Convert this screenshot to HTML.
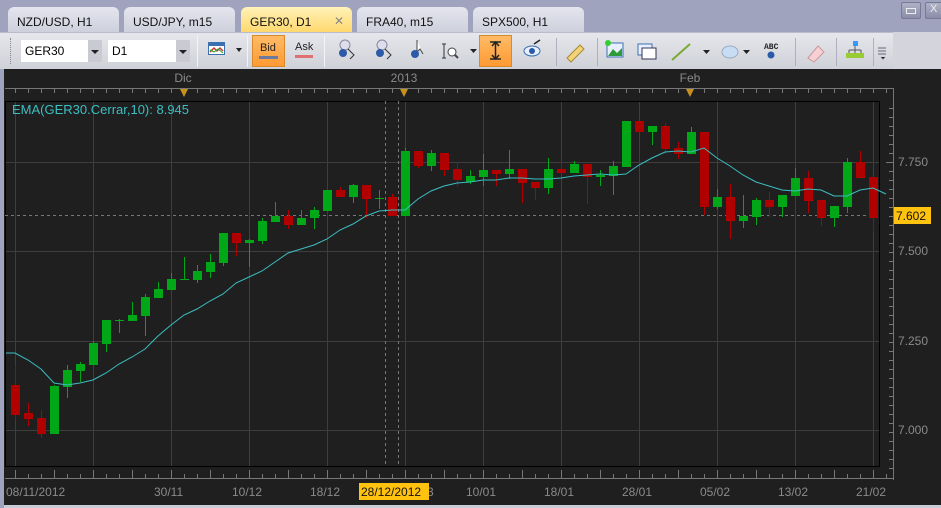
<!DOCTYPE html>
<html><head><meta charset="utf-8"><style>
*{margin:0;padding:0;box-sizing:border-box}
body{width:941px;height:508px;overflow:hidden;background:#9fa3bd;font-family:"Liberation Sans",sans-serif;position:relative}
.tab{position:absolute;top:7px;height:26px;width:111px;border-radius:6px 6px 0 0;background:linear-gradient(#e4e5ee,#cdcfdc);font-size:12px;color:#111;padding:8px 0 0 9px}
.tab.act{background:linear-gradient(#fff2b8,#ffd86a)}
.tb{position:absolute;left:0;top:32px;width:893px;height:37px;background:linear-gradient(#e6e7ec,#cfd1d8);border-top:1px solid #b8bbc8}
.tbr{position:absolute;left:893px;top:32px;width:48px;height:37px;background:#d3d4dc}
.sel{position:absolute;top:40px;height:22px;background:#fff;font-size:12px;padding:4px 4px}
.sel i{position:absolute;right:0;top:0;width:14px;height:22px;background:#c9cad2}
.sel i:after{content:"";position:absolute;left:3px;top:10px;border:4px solid transparent;border-top:4px solid #222}
.sep{position:absolute;top:35px;width:1px;height:32px;background:#aeb1bd;border-right:1px solid #f4f4f6}
.btn{position:absolute;top:35px;width:33px;height:32px;border:1px solid #d98a2a;background:linear-gradient(#ffbb66,#ff9a33)}
.ic{position:absolute;font-size:11px}
.dark{position:absolute;left:4px;top:69px;width:937px;height:436px;background:#1f1f1f}
.bot{position:absolute;left:0;top:505px;width:941px;height:3px;background:#c9cbd6}
</style></head><body>
<div class="tab" style="left:8px">NZD/USD, H1</div>
<div class="tab" style="left:124px">USD/JPY, m15</div>
<div class="tab act" style="left:241px">GER30, D1<span style="position:absolute;right:8px;top:7px;color:#888;font-size:12px">✕</span></div>
<div class="tab" style="left:357px">FRA40, m15</div>
<div class="tab" style="left:473px">SPX500, H1</div>
<div style="position:absolute;left:901px;top:2px;width:20px;height:17px;border-radius:2px;background:linear-gradient(#aeb1c6,#8a8ea8);border:1px solid #777a92"><div style="margin:5px 4px;height:6px;border:1px solid #eee"></div></div>
<div style="position:absolute;left:925px;top:2px;width:20px;height:17px;border-radius:2px;background:linear-gradient(#aeb1c6,#8a8ea8);border:1px solid #777a92;color:#eee;font-size:11px;padding-left:4px">X</div>
<div class="tb"></div><div class="tbr"></div>
<div style="position:absolute;left:10px;top:38px;width:2px;height:26px;border-left:1px dotted #888"></div>
<div class="sel" style="left:21px;width:81px">GER30<i></i></div>
<div class="sel" style="left:108px;width:82px">D1<i></i></div>
<div class="sep" style="left:197px"></div>
<svg class="ic" style="left:208px;top:42px" width="18" height="20"><rect x="0.5" y="0.5" width="16" height="12" fill="#fff" stroke="#3a6fb0"/><rect x="1" y="1" width="16" height="3" fill="#3a6fb0"/><polyline points="2,10 6,6 9,9 12,6 15,9" fill="none" stroke="#c33" stroke-width="1.5"/><polyline points="2,8 6,10 10,7 15,11" fill="none" stroke="#2a2" stroke-width="1"/></svg>
<div style="position:absolute;left:236px;top:48px;border:3.5px solid transparent;border-top:4px solid #222"></div>
<div class="sep" style="left:247px"></div>
<div class="btn" style="left:252px"><span style="position:absolute;left:7px;top:6px;font-size:11px;color:#222">Bid</span><span style="position:absolute;left:6px;top:20px;width:19px;height:3px;background:#6d7aa0"></span></div>
<span style="position:absolute;left:295px;top:41px;font-size:11px;color:#222">Ask</span><span style="position:absolute;left:295px;top:55px;width:18px;height:3px;background:#e07070"></span>
<div class="sep" style="left:324px"></div>
<svg style="position:absolute;left:337px;top:38px" width="220" height="28">
<g><circle cx="8" cy="7" r="5" fill="#dde" stroke="#889"/><circle cx="6" cy="15" r="4" fill="#2a5aa8"/><path d="M11 11 L17 17 L13 21" stroke="#333" fill="none"/></g>
<g transform="translate(37,0)"><circle cx="8" cy="7" r="5" fill="#dde" stroke="#889"/><circle cx="6" cy="15" r="4" fill="#2a5aa8"/><path d="M11 11 L17 17 L13 21" stroke="#333" fill="none"/></g>
<g transform="translate(72,0)"><path d="M8 2 L8 14 L11 11 L14 16" fill="#fff" stroke="#444"/><circle cx="6" cy="16" r="4" fill="#2a5aa8"/></g>
<g transform="translate(104,0)"><path d="M3 6 V20 M1 6 H5 M1 20 H5" stroke="#333"/><circle cx="11" cy="14" r="4" fill="#fff" stroke="#444"/><path d="M14 17 L17 20" stroke="#444" stroke-width="2"/></g>
<path d="M133 11 l3.5 4 l3.5 -4z" fill="#222"/>
</svg>
<div class="btn" style="left:479px"><svg width="31" height="30"><path d="M10 6 H21 M10 23 H21 M15.5 6 V23 M12 10 L15.5 6 L19 10 M12 19 L15.5 23 L19 19" stroke="#222" stroke-width="1.5" fill="none"/></svg></div>
<svg style="position:absolute;left:520px;top:38px" width="380" height="28">
<ellipse cx="12" cy="13" rx="8" ry="5" fill="#e8f0ff" stroke="#3a6fb0"/><circle cx="12" cy="13" r="3" fill="#2a5aa8"/><path d="M14 6 L20 2" stroke="#222" stroke-width="1.5"/>
<rect x="36" y="0" width="1" height="28" fill="#aeb1bd"/>
<path d="M47 20 L60 7 L64 11 L51 24z" fill="#f2d27a" stroke="#a88a30"/>
<rect x="77" y="0" width="1" height="28" fill="#aeb1bd"/>
<rect x="87" y="5" width="16" height="14" fill="#e8f0ff" stroke="#3a6fb0"/><path d="M88 18 L93 11 L97 15 L102 10 V18z" fill="#2f9a3a"/><circle cx="88" cy="5" r="3" fill="#3c3"/>
<rect x="118" y="6" width="14" height="11" fill="#e8f0ff" stroke="#3a6fb0"/><rect x="122" y="10" width="14" height="11" fill="#fff" stroke="#335"/>
<path d="M152 22 L170 6" stroke="#7a3" stroke-width="2"/><path d="M183 12 l3.5 4 l3.5 -4z" fill="#222"/>
<ellipse cx="210" cy="14" rx="8" ry="6" fill="#c8dcf4" stroke="#9ab"/><path d="M223 12 l3.5 4 l3.5 -4z" fill="#222"/>
<text x="244" y="11" font-size="8" font-family="Liberation Mono" font-weight="bold" fill="#222">ABC</text><circle cx="251" cy="17" r="3.5" fill="#2a5aa8"/>
<rect x="275" y="0" width="1" height="28" fill="#aeb1bd"/>
<path d="M288 20 L298 8 L304 14 L294 24z" fill="#f7d0d6" stroke="#c99"/>
<rect x="316" y="0" width="1" height="28" fill="#aeb1bd"/>
<rect x="333" y="3" width="5" height="5" fill="#39f"/><path d="M335 8 V12 M329 12 H341 M329 12 V15 M335 12 V15 M341 12 V15" stroke="#555"/><rect x="326" y="15" width="6" height="5" fill="#9c3"/><rect x="332" y="15" width="6" height="5" fill="#9c3"/><rect x="338" y="15" width="6" height="5" fill="#9c3"/>
<rect x="353" y="-3" width="1" height="32" fill="#aeb1bd"/>
<path d="M358 10 H366 M358 13 H366 M358 16 H366 M361 19 l2 2 l2 -2" stroke="#667"/>
</svg>
<div class="dark"></div>
<div class="bot"></div>
<div style="position:absolute;left:0;top:69px;width:4px;height:439px;background:#9fa3bd"></div>
<svg id="ch" style="position:absolute;left:0;top:0" width="941" height="508" font-family="Liberation Sans" font-size="12">
<text x="183" y="82" fill="#8a8a8a" text-anchor="middle">Dic</text>
<text x="404" y="82" fill="#8a8a8a" text-anchor="middle">2013</text>
<text x="690" y="82" fill="#8a8a8a" text-anchor="middle">Feb</text>
<path d="M5 88.5 H893.5 V480 M5 478.5 H893" stroke="#777" fill="none"/>
<g id="ticks" stroke="#777"></g>
<path d="M180 89 h8 l-4 8z M400 89 h8 l-4 8z M686 89 h8 l-4 8z" fill="#c8901e"/>
<rect x="5.5" y="101.5" width="874" height="365" fill="#1f1f1f" stroke="#000"/>
<g id="grid" stroke="#3e3e3e"></g>
<path d="M5 215.5 H880 M385.5 101 V466 M398.5 101 V466" stroke="#777" stroke-dasharray="3,3"/>
<g id="cd"></g>
<polyline id="ema" fill="none" stroke="#3bbfc2" stroke-width="1"/>
<text x="12" y="114" fill="#3bbfc2" font-size="13">EMA(GER30.Cerrar,10): 8.945</text>
<g fill="#8a8a8a">
<text x="898" y="166">7.750</text><text x="898" y="255">7.500</text><text x="898" y="345">7.250</text><text x="898" y="434">7.000</text>
<text x="6" y="496">08/11/2012</text><text x="154" y="496">30/11</text><text x="232" y="496">10/12</text><text x="310" y="496">18/12</text><text x="427" y="496">3</text><text x="466" y="496">10/01</text><text x="544" y="496">18/01</text><text x="622" y="496">28/01</text><text x="700" y="496">05/02</text><text x="778" y="496">13/02</text><text x="856" y="496">21/02</text>
</g>
<rect x="359" y="483" width="70" height="17" fill="#ffc20e"/><text x="361" y="496" fill="#111">28/12/2012</text>
<rect x="894" y="207" width="37" height="17" fill="#ffc20e"/><text x="896" y="220" fill="#111">7.602</text>
</svg>
<script>
var d=[['R',385,415,366,420],['R',413,419,403,426],['R',418,434,410,438],['G',386,434,385,434],['G',370,387,365,398],['G',364,371,362,382],['G',343,365,341,365],['G',320,344,320,352],['G',320,321,319,333],['G',315,321,302,321],['G',297,316,294,336],['G',289,298,282,298],['G',279,290,273,290],['G',279,280,257,280],['G',271,280,265,283],['G',262,272,254,278],['G',233,263,233,266],['R',233,243,233,256],['G',240,243,239,267],['G',221,241,218,244],['G',216,222,202,222],['R',216,225,210,229],['G',218,225,210,225],['G',210,218,207,229],['G',190,211,190,211],['R',190,197,187,197],['G',185,197,184,203],['R',185,199,185,218],['G',198,199,190,209],['R',197,216,194,216],['G',151,216,148,216],['R',151,166,151,168],['G',153,166,150,171],['R',153,170,153,176],['R',169,180,162,186],['G',176,182,170,184],['G',170,177,154,186],['R',170,174,170,186],['G',169,174,150,179],['R',169,183,169,203],['R',182,188,182,200],['G',169,188,158,194],['R',169,173,162,173],['G',164,173,161,173],['R',164,177,164,204],['G',175,177,170,186],['G',166,176,161,195],['G',121,167,121,167],['R',121,132,121,132],['G',126,132,126,145],['R',126,149,123,154],['R',148,154,142,159],['G',132,154,127,154],['R',132,207,132,215],['G',197,207,189,209],['R',197,221,184,239],['G',216,221,195,228],['G',200,217,198,225],['R',200,207,192,217],['G',195,207,195,217],['G',178,196,168,196],['R',178,201,171,213],['R',200,218,200,226],['G',206,218,206,227],['G',162,207,158,213],['R',162,178,151,178],['R',177,218,177,231]];
var e=[353,360,369,383,385,383,380,373,364,357,349,336,325,315,309,301,294,283,277,271,262,253,249,245,239,230,224,216,211,210,210,199,191,186,183,182,180,180,178,178,179,179,178,176,175,174,175,174,165,158,152,151,152,148,158,166,175,182,186,190,191,189,190,196,196,190,188,194];
var g=document.getElementById('cd'),s='';
d.forEach(function(c,i){var x=15+13*i,col=c[0]=='G'?'#00a818':'#b00000';
s+='<line x1="'+(x+.5)+'" x2="'+(x+.5)+'" y1="'+c[3]+'" y2="'+c[4]+'" stroke="'+col+'"/>';
s+='<rect x="'+(x-4)+'" y="'+c[1]+'" width="9" height="'+Math.max(1,c[2]-c[1])+'" fill="'+col+'"/>';});
g.innerHTML=s;
var p='6,353';e.forEach(function(y,i){p+=' '+(15+13*i)+','+y});document.getElementById('ema').setAttribute('points',p);
var gr='';[162,251,341,430].forEach(function(y){gr+='<line x1="6" x2="879" y1="'+(y+.5)+'" y2="'+(y+.5)+'"/>'});
[15,93,171,249,327,405,483,561,639,717,795,873].forEach(function(x){gr+='<line y1="102" y2="466" x1="'+(x+.5)+'" x2="'+(x+.5)+'"/>'});
document.getElementById('grid').innerHTML=gr;
var t='';for(var x=15;x<890;x+=13){t+='<line x1="'+(x+.5)+'" x2="'+(x+.5)+'" y1="'+(x%39==15%39?470:474)+'" y2="478"/>';t+='<line x1="'+(x+.5)+'" x2="'+(x+.5)+'" y1="89" y2="93"/>';}
for(var y=108;y<470;y+=9){t+='<line x1="'+(((y-162)%89==0)?886:889)+'" x2="893" y1="'+(y+.5)+'" y2="'+(y+.5)+'"/>';}
document.getElementById('ticks').innerHTML=t;
</script>
</body></html>
